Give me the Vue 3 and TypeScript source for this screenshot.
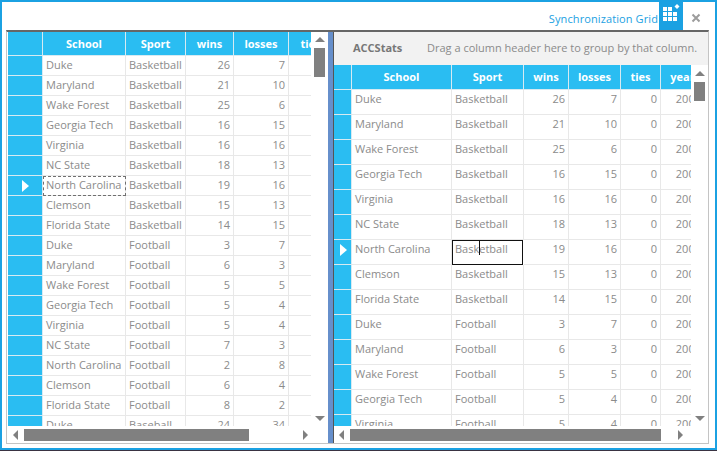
<script setup lang="ts">
interface Stat {
  school: string
  sport: string
  wins: number
  losses: number
}

const raw: [string, string, number, number][] = [
  ['Duke', 'Basketball', 26, 7],
  ['Maryland', 'Basketball', 21, 10],
  ['Wake Forest', 'Basketball', 25, 6],
  ['Georgia Tech', 'Basketball', 16, 15],
  ['Virginia', 'Basketball', 16, 16],
  ['NC State', 'Basketball', 18, 13],
  ['North Carolina', 'Basketball', 19, 16],
  ['Clemson', 'Basketball', 15, 13],
  ['Florida State', 'Basketball', 14, 15],
  ['Duke', 'Football', 3, 7],
  ['Maryland', 'Football', 6, 3],
  ['Wake Forest', 'Football', 5, 5],
  ['Georgia Tech', 'Football', 5, 4],
  ['Virginia', 'Football', 5, 4],
  ['NC State', 'Football', 7, 3],
  ['North Carolina', 'Football', 2, 8],
  ['Clemson', 'Football', 6, 4],
  ['Florida State', 'Football', 8, 2],
  ['Duke', 'Baseball', 24, 34],
]

const stats: Stat[] = raw.map(([school, sport, wins, losses]) => ({ school, sport, wins, losses }))
const selected = 6
</script>

<template>
  <div class="window">
    <div class="title-bar">
      <span class="title">Synchronization Grid</span>
      <span class="title-icon">
        <svg width="24" height="30" viewBox="0 0 24 30">
          <g fill="#fff">
            <rect x="4" y="7" width="4" height="4" />
            <rect x="9" y="7" width="4" height="4" />
            <rect x="4" y="12" width="4" height="4" />
            <rect x="9" y="12" width="4" height="4" />
            <rect x="14" y="12" width="4" height="4" />
            <rect x="4" y="17" width="4" height="4" />
            <rect x="9" y="17" width="4" height="4" />
            <rect x="14" y="17" width="4" height="4" />
            <polygon points="18,4 20.5,6.5 18,9 15.5,6.5" />
          </g>
        </svg>
      </span>
      <span class="close">
        <svg width="10" height="10" viewBox="0 0 10 10">
          <path d="M1.5 1.5 L8.5 8.5 M8.5 1.5 L1.5 8.5" stroke="#9c9c9c" stroke-width="2" fill="none" />
        </svg>
      </span>
    </div>

    <div class="panes">
      <section class="pane left">
        <div class="grid-area">
          <div class="grid-view">
            <div class="row head">
              <div class="rh"></div>
              <div>School</div>
              <div>Sport</div>
              <div>wins</div>
              <div>losses</div>
              <div>ties</div>
            </div>
            <div class="rows">
              <div v-for="(s, i) in stats" :key="i" class="row">
                <div class="rh"><i v-if="i === selected" class="marker"></i></div>
                <div :class="{ focus: i === selected }">{{ s.school }}</div>
                <div>{{ s.sport }}</div>
                <div class="num">{{ s.wins }}</div>
                <div class="num">{{ s.losses }}</div>
                <div class="num">0</div>
              </div>
            </div>
          </div>
          <div class="vbar">
            <i class="arrow up"></i>
            <b class="vthumb"></b>
            <i class="arrow down"></i>
          </div>
        </div>
        <div class="hbar">
          <i class="arrow back"></i>
          <b class="hthumb"></b>
          <i class="arrow fwd"></i>
        </div>
      </section>

      <div class="splitter"></div>

      <section class="pane right">
        <div class="group-panel">
          <strong>ACCStats</strong>
          <span>Drag a column header here to group by that column.</span>
        </div>
        <div class="grid-area">
          <div class="grid-view">
            <div class="row head">
              <div class="rh"></div>
              <div>School</div>
              <div>Sport</div>
              <div>wins</div>
              <div>losses</div>
              <div>ties</div>
              <div>year</div>
            </div>
            <div class="rows">
              <div v-for="(s, i) in stats.slice(0, 14)" :key="i" class="row">
                <div class="rh"><i v-if="i === selected" class="marker"></i></div>
                <div>{{ s.school }}</div>
                <div :class="{ editing: i === selected }">{{ s.sport }}<i v-if="i === selected" class="caret"></i></div>
                <div class="num">{{ s.wins }}</div>
                <div class="num">{{ s.losses }}</div>
                <div class="num">0</div>
                <div class="num">2000</div>
              </div>
            </div>
          </div>
          <div class="vbar">
            <i class="arrow up"></i>
            <b class="vthumb"></b>
            <i class="arrow down"></i>
          </div>
        </div>
        <div class="hbar">
          <i class="arrow back"></i>
          <b class="hthumb"></b>
          <i class="arrow fwd"></i>
        </div>
      </section>
    </div>
  </div>
</template>

<style scoped>
.window {
  box-sizing: border-box;
  width: 717px;
  height: 450px;
  display: flex;
  flex-direction: column;
  padding: 0 6px 4px 4px;
  background: #fff;
  border: 2px solid #1ba1e2;
  font-family: "Open Sans", "Liberation Sans", sans-serif;
  font-size: 11px;
  color: #8b8b8b;
}
.title-bar {
  height: 28px;
  flex: none;
  display: flex;
  justify-content: flex-end;
  align-items: stretch;
}
.title {
  align-self: center;
  margin: 4px 1px 0 0;
  font-size: 11px;
  letter-spacing: 0.1px;
  color: #1ba1e2;
}
.title-icon {
  width: 24px;
  margin-top: -2px;
  background: #1ba1e2;
}
.title-icon svg {
  display: block;
}
.close {
  width: 26px;
  display: flex;
  align-items: center;
  justify-content: center;
  padding-top: 3px;
  box-sizing: border-box;
}
.panes {
  flex: 1;
  min-height: 0;
  display: flex;
  border: 1px solid #c4c4c4;
  border-top: 2px solid #666;
}
.pane {
  display: flex;
  flex-direction: column;
  min-width: 0;
}
.pane.left {
  width: 320px;
  padding-left: 1px;
}
.pane.right {
  flex: 1;
  border-left: 1px solid #555;
}
.splitter {
  width: 5px;
  flex: none;
  background: #668fcb;
}
.group-panel {
  height: 33px;
  flex: none;
  display: flex;
  align-items: center;
  padding: 0 0 2px 19px;
  box-sizing: border-box;
  background: #f2f2f2;
  font-size: 11px;
  white-space: nowrap;
}
.group-panel strong {
  width: 74px;
  flex: none;
  color: #777;
}
.grid-area {
  flex: 1;
  min-height: 0;
  display: flex;
}
.grid-view {
  flex: 1;
  min-width: 0;
  overflow: hidden;
  display: flex;
  flex-direction: column;
}
.rows {
  flex: 1;
  min-height: 0;
  overflow: hidden;
}
.row {
  display: grid;
  white-space: nowrap;
}
.left .row {
  grid-template-columns: 35px 83px 60px 48px 55px 44px;
  height: 20px;
  line-height: 18px;
}
.right .row {
  grid-template-columns: 18px 100px 72px 45px 52px 40px 44px;
  height: 25px;
  line-height: 18px;
}
.left .row.head {
  height: 24px;
  line-height: 23px;
}
.right .row.head {
  height: 25px;
  line-height: 24px;
}
.row > div {
  box-sizing: border-box;
  padding: 0 3px;
  overflow: hidden;
  border-right: 1px solid #e8e8e8;
  border-bottom: 1px solid #e8e8e8;
}
.row > .num {
  text-align: right;
}
.row > .rh {
  position: relative;
  background: #2abdf2;
  border-color: #d7eaf2;
}
.row.head > div {
  background: #2abdf2;
  color: #fff;
  font-size: 11px;
  font-weight: 700;
  text-align: center;
  border-color: #d7eaf2;
}
.marker {
  position: absolute;
  top: 50%;
  left: 14px;
  margin-top: -6px;
  border-left: 7px solid #fff;
  border-top: 6px solid transparent;
  border-bottom: 6px solid transparent;
}
.right .marker {
  left: 6px;
  margin-top: -8px;
}
.row > .focus {
  outline: 1px dashed #707070;
  outline-offset: -1px;
}
.row > .editing {
  position: relative;
  border: 1px solid #111;
  padding: 0 2px;
  width: 71px;
  line-height: 15px;
}
.caret {
  position: absolute;
  left: 26px;
  top: 0;
  width: 1px;
  height: 14px;
  background: #111;
}
.vbar {
  width: 17px;
  flex: none;
  display: flex;
  flex-direction: column;
  align-items: center;
  padding: 5px 0;
  box-sizing: border-box;
}
.vthumb {
  width: 11px;
  height: 29px;
  margin-top: 6px;
  background: #808080;
}
.right .vbar {
  padding-top: 6px;
}
.right .vthumb {
  height: 19px;
}
.hbar {
  height: 17px;
  flex: none;
  display: flex;
  align-items: center;
  padding: 0 5px;
  box-sizing: border-box;
}
.hthumb {
  height: 12px;
  width: 225px;
  margin-left: 6px;
  background: #808080;
}
.right .hthumb {
  width: 311px;
}
.arrow {
  display: block;
  width: 0;
  height: 0;
  flex: none;
}
.arrow.up {
  border-left: 5px solid transparent;
  border-right: 5px solid transparent;
  border-bottom: 5px solid #808080;
}
.arrow.down {
  margin-top: auto;
  border-left: 5px solid transparent;
  border-right: 5px solid transparent;
  border-top: 5px solid #808080;
}
.arrow.back {
  border-top: 5px solid transparent;
  border-bottom: 5px solid transparent;
  border-right: 5px solid #808080;
}
.arrow.fwd {
  margin-left: auto;
  border-top: 5px solid transparent;
  border-bottom: 5px solid transparent;
  border-left: 5px solid #808080;
}
.left .arrow.fwd {
  margin-right: 15px;
}
.right .arrow.fwd {
  margin-right: 20px;
}
</style>

<style>
html,
body {
  background: #3a3342;
}
</style>
